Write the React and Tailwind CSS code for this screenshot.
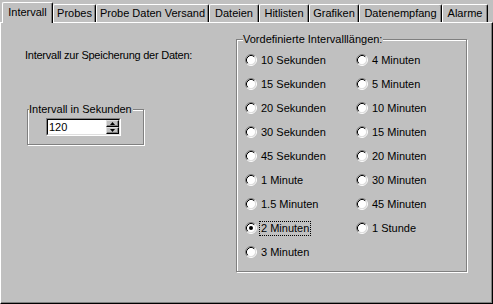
import { useState } from 'react';

const tabs = [
  { name: 'Intervall', w: 'w-[51px]' },
  { name: 'Probes', w: 'w-[43px]' },
  { name: 'Probe Daten Versand', w: 'w-[113px]' },
  { name: 'Dateien', w: 'w-[50px]' },
  { name: 'Hitlisten', w: 'w-[50px]' },
  { name: 'Grafiken', w: 'w-[50px]' },
  { name: 'Datenempfang', w: 'w-[83px]' },
  { name: 'Alarme', w: 'w-[46px]' },
];

const optionen = [
  ['10 Sekunden', '4 Minuten'],
  ['15 Sekunden', '5 Minuten'],
  ['20 Sekunden', '10 Minuten'],
  ['30 Sekunden', '15 Minuten'],
  ['45 Sekunden', '20 Minuten'],
  ['1 Minute', '30 Minuten'],
  ['1.5 Minuten', '45 Minuten'],
  ['2 Minuten', '1 Stunde'],
  ['3 Minuten', null],
];

function Radio({ checked }) {
  return (
    <svg width="12" height="12" viewBox="0 0 12 12" className="shrink-0">
      <circle cx="6" cy="6" r="4.5" fill="#fff" />
      <path d="M2.11 9.89 A5.5 5.5 0 0 1 9.89 2.11" fill="none" stroke="#808080" />
      <path d="M9.89 2.11 A5.5 5.5 0 0 1 2.11 9.89" fill="none" stroke="#fff" />
      <path d="M2.82 9.18 A4.5 4.5 0 0 1 9.18 2.82" fill="none" stroke="#000" />
      <path d="M9.18 2.82 A4.5 4.5 0 0 1 2.82 9.18" fill="none" stroke="#dfdfdf" />
      {checked && <circle cx="6" cy="6" r="2" fill="#000" />}
    </svg>
  );
}

function Option({ label, checked, onClick }) {
  return (
    <div className="flex items-center gap-[4px] h-[24px] cursor-default whitespace-nowrap" onClick={onClick}>
      <Radio checked={checked} />
      <span className={checked ? 'outline outline-1 outline-dotted outline-black leading-[13px] px-px -mx-px' : 'leading-[13px]'}>{label}</span>
    </div>
  );
}

export default function App() {
  const [auswahl, setAuswahl] = useState('2 Minuten');

  return (
    <div className="w-[493px] h-[304px] bg-[#c0c0c0] text-black text-[11px] leading-[13px] flex flex-col overflow-hidden select-none" style={{ fontFamily: '"Liberation Sans", Arial, sans-serif' }}>
      {/* Tab-Leiste */}
      <div className="flex items-end h-[22px] pl-[2px] shrink-0 whitespace-nowrap">
        {tabs.map((t, i) => i === 0 ? (
          <div key={t.name} className={`${t.w} relative z-10 shrink-0 h-[21px] -mb-px text-center pt-[3px] bg-[#c0c0c0] border-t border-l border-white border-r border-r-black rounded-tl-[2px] rounded-tr-[2px] shadow-[inset_-1px_0_0_#808080]`}>
            {t.name}
          </div>
        ) : (
          <div key={t.name} className={`${t.w} shrink-0 h-[18px] text-center pt-[2px] border-t border-l border-white border-r border-r-black rounded-tl-[2px] rounded-tr-[2px] shadow-[inset_-1px_0_0_#808080]`}>
            {t.name}
          </div>
        ))}
      </div>

      {/* Panel */}
      <div className="flex-1 flex border-t border-l border-white border-r border-b border-r-black border-b-black shadow-[inset_-1px_-1px_0_#808080]">
        <div className="w-[235px] shrink-0 pl-[24px] pt-[26px]">
          <div className="tracking-[-0.25px]">Intervall zur Speicherung der Daten:</div>
          <div className="relative mt-[47px] ml-[2px] w-[117px] h-[36px] border border-[#808080] shadow-[inset_1px_1px_0_#fff,1px_1px_0_#fff]">
            <span className="absolute -top-[7px] left-[1px] bg-[#c0c0c0] pr-px whitespace-nowrap">Intervall in Sekunden</span>
            <div className="mt-[8px] ml-[18px] w-[75px] h-[18px] flex border-t border-l border-[#808080] border-b border-r border-b-white border-r-white">
              <div className="flex-1 flex bg-white border-t border-l border-black border-b border-r border-b-[#dfdfdf] border-r-[#dfdfdf]">
                <span className="flex-1 pl-[1px] pt-[1px]">120</span>
                <div className="w-[13px] flex flex-col">
                  <div className="flex-1 bg-[#c0c0c0] flex items-center justify-center border-t border-l border-[#dfdfdf] border-b border-r border-b-black border-r-black shadow-[inset_-1px_-1px_0_#808080]">
                    <svg width="5" height="3" viewBox="0 0 5 3"><path d="M2.5 0 L5 3 L0 3 Z" fill="#000" /></svg>
                  </div>
                  <div className="flex-1 bg-[#c0c0c0] flex items-center justify-center border-t border-l border-[#dfdfdf] border-b border-r border-b-black border-r-black shadow-[inset_-1px_-1px_0_#808080]">
                    <svg width="5" height="3" viewBox="0 0 5 3"><path d="M0 0 L5 0 L2.5 3 Z" fill="#000" /></svg>
                  </div>
                </div>
              </div>
            </div>
          </div>
        </div>

        <div className="pt-[16px]">
          <div className="relative w-[231px] h-[233px] border border-[#808080] shadow-[inset_1px_1px_0_#fff,1px_1px_0_#fff] pl-[8px] pt-[8px]">
            <span className="absolute -top-[7px] left-[6px] bg-[#c0c0c0] pr-px whitespace-nowrap">Vordefinierte Intervalllängen:</span>
            <div className="grid grid-cols-[111px_1fr]">
              {optionen.flatMap(([a, b]) => [
                <Option key={a} label={a} checked={auswahl === a} onClick={() => setAuswahl(a)} />,
                b ? <Option key={b} label={b} checked={auswahl === b} onClick={() => setAuswahl(b)} /> : <div key={a + '-leer'} />,
              ])}
            </div>
          </div>
        </div>
      </div>
    </div>
  );
}
